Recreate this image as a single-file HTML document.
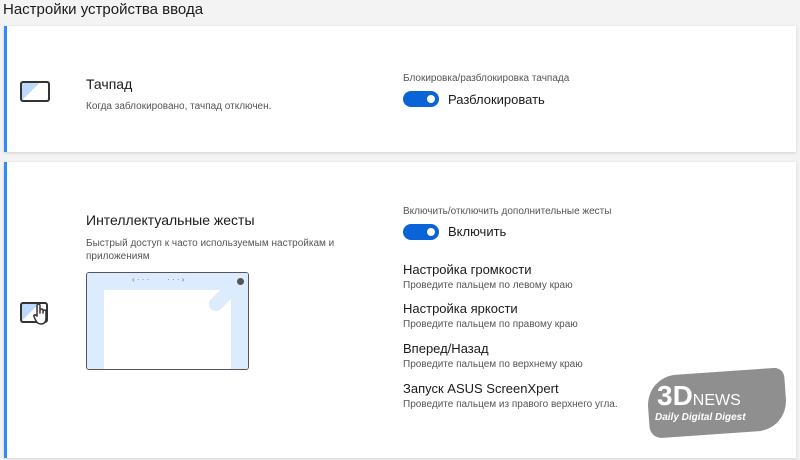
<!DOCTYPE html>
<html><head><meta charset="utf-8"><style>
body{margin:0;width:800px;height:460px;background:#f3f3f3;font-family:"Liberation Sans",sans-serif;position:relative;overflow:hidden;color:#1a1a1a}
.a{position:absolute;white-space:nowrap}
.card{position:absolute;left:4px;right:4px;background:#fff;border-left:3px solid #2f8cf7;box-shadow:0 1px 3px rgba(0,0,0,.15)}
.tg{position:absolute;width:36px;height:16px;border-radius:8px;background:#0a64d8}
.tg:after{content:"";position:absolute;right:4px;top:4px;width:8px;height:8px;border-radius:50%;background:#fff}
.s{font-size:10px;color:#555}
.t{font-size:13px;color:#1a1a1a}
</style></head><body>
<div class="a" style="left:3px;top:1px;font-size:15px">Настройки устройства ввода</div>
<div class="card" style="top:26px;height:126px"></div>
<div class="card" style="top:162px;height:296px"></div>
<div class="a" style="left:20px;top:81px;width:26px;height:17px;border:2px solid #333;border-radius:3px;background:linear-gradient(135deg,#bcd8fb 40%,#fff 41%)"></div>
<div class="a t" style="left:86px;top:76px;font-size:14px">Тачпад</div>
<div class="a s" style="left:86px;top:101px">Когда заблокировано, тачпад отключен.</div>
<div class="a s" style="left:403px;top:73px">Блокировка/разблокировка тачпада</div>
<div class="tg" style="left:403px;top:91px"></div>
<div class="a t" style="left:448px;top:92px">Разблокировать</div>

<div class="a" style="left:20px;top:302px;width:24px;height:17px;border:2px solid #333;border-radius:3px;background:linear-gradient(135deg,#bcd8fb 40%,#fff 41%)"></div>
<svg class="a" style="left:33px;top:302px" width="16" height="24" viewBox="0 0 16 24"><path d="M4 14V3.5a1.5 1.5 0 0 1 3 0V11V8.5a1.5 1.5 0 0 1 3 0V11V9.5a1.5 1.5 0 0 1 3 0V16c0 4-2 6-5 6s-4-1.5-5.5-4L1 14.5c-.7-1 .6-2.2 1.5-1.4z" fill="#fff" stroke="#333" stroke-width="1.5" stroke-linejoin="round"/></svg>
<div class="a t" style="left:86px;top:212px;font-size:14px">Интеллектуальные жесты</div>
<div class="a s" style="left:86px;top:237px;line-height:13px">Быстрый доступ к часто используемым настройкам и<br>приложениям</div>
<div class="a" style="left:86px;top:272px;width:161px;height:96px;border:1.5px solid #555;border-radius:3px;background:#fff;overflow:hidden">
<div class="a" style="left:0;top:0;right:0;height:17px;background:#dcebfd"></div>
<div class="a" style="left:0;top:0;width:17px;bottom:0;background:#dcebfd"></div>
<div class="a" style="right:0;top:0;width:17px;bottom:0;background:#dcebfd"></div>
<div class="a" style="right:-4px;top:12px;width:48px;height:14px;border-radius:7px;background:#dcebfd;transform:rotate(-45deg)"></div>
<div class="a" style="right:4px;top:5px;width:7px;height:7px;border-radius:50%;background:#555"></div>
<div class="a" style="left:45px;top:2px;font-size:8px;color:#777">‹ · · ·&nbsp;&nbsp;&nbsp;&nbsp;&nbsp;&nbsp;&nbsp;&nbsp;· · · ›</div>
</div>
<div class="a s" style="left:403px;top:206px">Включить/отключить дополнительные жесты</div>
<div class="tg" style="left:403px;top:224px"></div>
<div class="a t" style="left:448px;top:224px">Включить</div>
<div class="a t" style="left:403px;top:262px">Настройка громкости</div>
<div class="a s" style="left:403px;top:280px">Проведите пальцем по левому краю</div>
<div class="a t" style="left:403px;top:301px">Настройка яркости</div>
<div class="a s" style="left:403px;top:319px">Проведите пальцем по правому краю</div>
<div class="a t" style="left:403px;top:341px">Вперед/Назад</div>
<div class="a s" style="left:403px;top:359px">Проведите пальцем по верхнему краю</div>
<div class="a t" style="left:403px;top:381px">Запуск ASUS ScreenXpert</div>
<div class="a s" style="left:403px;top:399px">Проведите пальцем из правого верхнего угла.</div>

<div class="a" style="left:648px;top:372px;width:138px;height:62px;background:#8f8f8f;border-radius:30px 10px 30px 12px;transform:rotate(-4deg)"></div>
<div class="a" style="left:657px;top:380px;font-size:28px;font-weight:bold;color:#fff">3D<span style="font-size:16px;font-weight:normal">NEWS</span></div>
<div class="a" style="left:655px;top:412px;font-size:10px;font-weight:bold;font-style:italic;color:#fff">Daily Digital Digest</div>
</body></html>
